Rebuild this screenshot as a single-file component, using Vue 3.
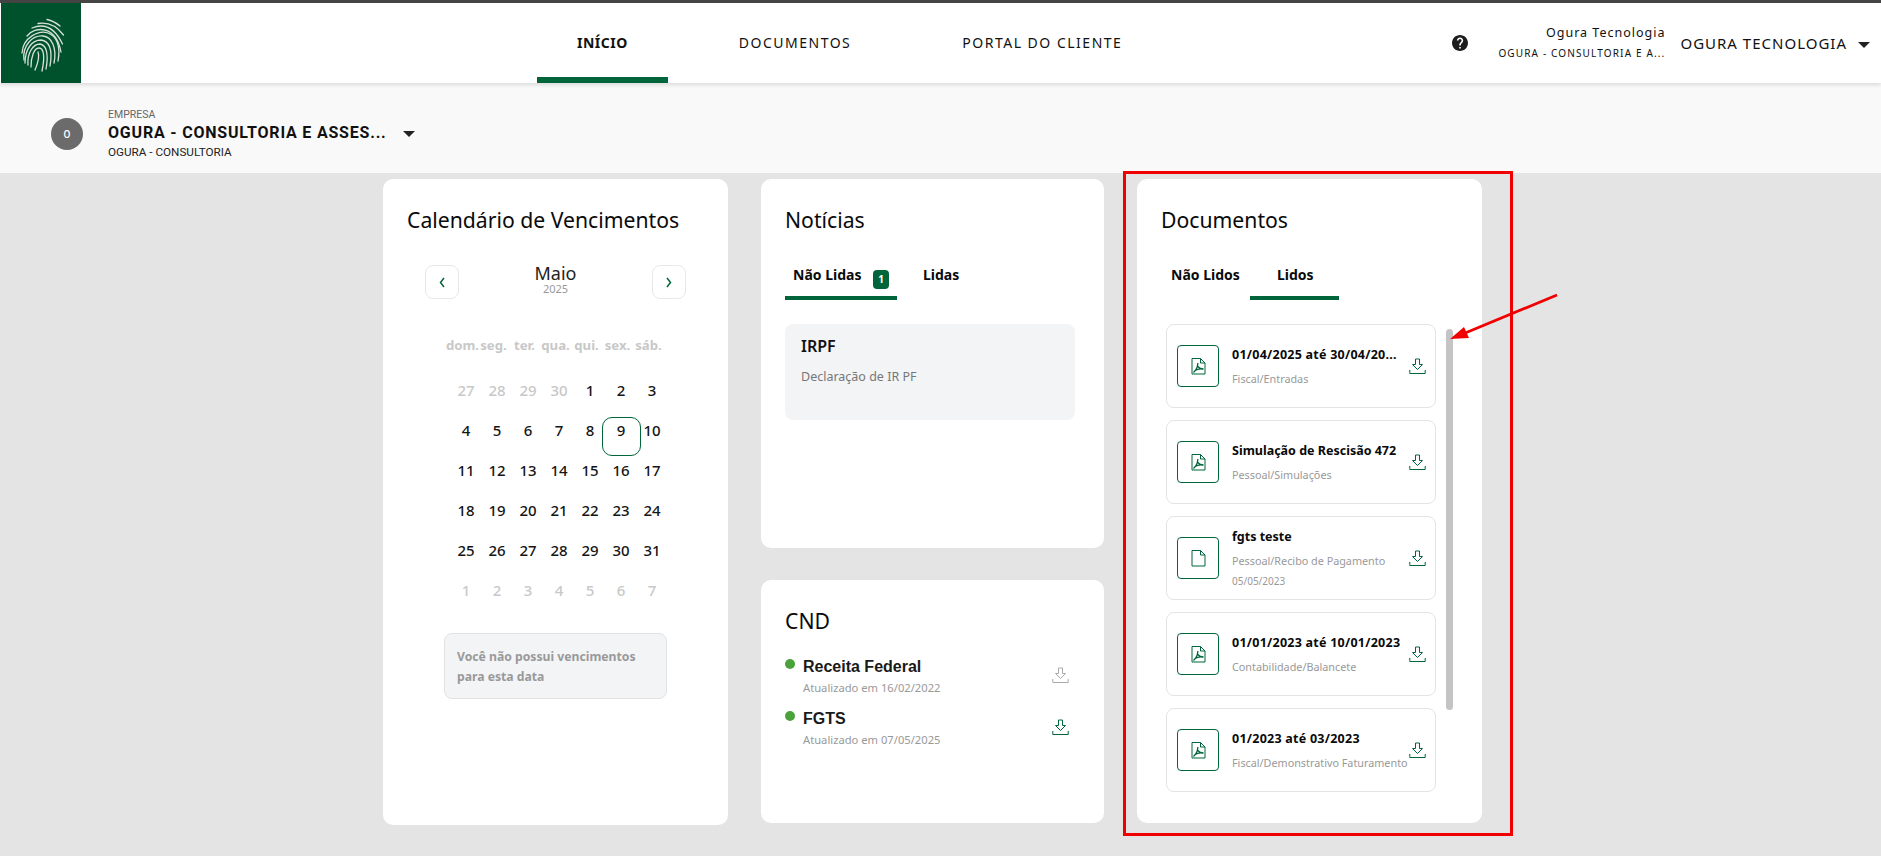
<template>
  <div class="page">
    <header class="topbar">
      <div class="logo">
        <svg width="80" height="80" viewBox="0 0 80 80" fill="none" stroke="#d5e2d9" stroke-width="1.3" stroke-linecap="round">
          <path d="M46 16.5Q53 18 59 23" />
          <path d="M37 20.5Q52 18 62.5 32" />
          <path d="M31 25Q50 17 61.5 41" />
          <path d="M26 33C34 23 55 22 60 49" />
          <path d="M21 50C22 34 38 27 47 30C55 33 60 42 57 58" />
          <path d="M23 57C21 42 32 32 42 33C51 34 56 45 53 60" />
          <path d="M24 60C24 46 31 37 40 37C48 38 52 46 49 63" />
          <path d="M27 62C26 50 32 41 39 41C45 42 48 50 45 66" />
          <path d="M30 64C30 54 33 45 38 45C43 45 44 54 41 68" />
          <path d="M34 67C37 60 39 54 37 49" />
        </svg>
      </div>
      <nav class="nav">
        <a
          v-for="item in navItems"
          :key="item"
          :class="['nav-item', { 'nav-item--active': item === 'INÍCIO' }]"
        >{{ item }}</a>
      </nav>
      <div class="user">
        <svg class="help" width="16" height="16" viewBox="2 2 20 20" fill="#1d1d1d">
          <path d="M12 2C6.48 2 2 6.48 2 12s4.48 10 10 10 10-4.48 10-10S17.52 2 12 2zm1 17h-2v-2h2v2zm2.07-7.75l-.9.92C13.45 12.9 13 13.5 13 15h-2v-.5c0-1.1.45-2.1 1.17-2.83l1.24-1.26c.37-.36.59-.86.59-1.41 0-1.1-.9-2-2-2s-2 .9-2 2H8c0-2.21 1.79-4 4-4s4 1.79 4 4c0 .88-.36 1.68-.93 2.25z" />
        </svg>
        <div class="user-info">
          <div class="user-name">Ogura Tecnologia</div>
          <div class="user-company">OGURA - CONSULTORIA E A...</div>
        </div>
        <div class="user-menu">OGURA TECNOLOGIA</div>
        <span class="caret"></span>
      </div>
    </header>

    <section class="company">
      <div class="avatar">O</div>
      <div class="company-info">
        <div class="company-label">EMPRESA</div>
        <div class="company-name">OGURA - CONSULTORIA E ASSES...</div>
        <div class="company-sub">OGURA - CONSULTORIA</div>
      </div>
      <span class="caret caret--company"></span>
    </section>

    <main class="content">
      <div class="card card--calendar">
        <h2 class="card-title">Calendário de Vencimentos</h2>
        <div class="month">
          <button class="month-btn">
            <svg width="6" height="11" viewBox="0 0 6 11" fill="none" stroke="#00653b" stroke-width="1.5"><path d="M5 1L1.500 5.500L5 10" /></svg>
          </button>
          <div class="month-label">
            <div class="month-name">Maio</div>
            <div class="month-year">2025</div>
          </div>
          <button class="month-btn">
            <svg width="6" height="11" viewBox="0 0 6 11" fill="none" stroke="#00653b" stroke-width="1.5"><path d="M1 1L4.500 5.500L1 10" /></svg>
          </button>
        </div>
        <div class="weekdays">
          <span v-for="day in weekdays" :key="day">{{ day }}</span>
        </div>
        <div class="days">
          <span
            v-for="(day, i) in days"
            :key="i"
            :class="['day', { 'day--muted': day.muted, 'day--selected': day.selected }]"
          >{{ day.n }}</span>
        </div>
        <div class="no-due">Você não possui vencimentos para esta data</div>
      </div>

      <div class="middle">
        <div class="card card--news">
          <h2 class="card-title">Notícias</h2>
          <div class="tabs">
            <div class="tab tab--news tab--active">Não Lidas <span class="badge">1</span></div>
            <div class="tab tab--news-read">Lidas</div>
          </div>
          <div class="news-item">
            <div class="news-title">IRPF</div>
            <div class="news-desc">Declaração de IR PF</div>
          </div>
        </div>

        <div class="card card--cnd">
          <h2 class="card-title">CND</h2>
          <div v-for="cnd in cnds" :key="cnd.name" class="cnd-row">
            <span class="dot"></span>
            <div class="cnd-text">
              <div class="cnd-name">{{ cnd.name }}</div>
              <div class="cnd-date">{{ cnd.date }}</div>
            </div>
            <svg :class="['download', 'cnd-download', { 'download--off': cnd.off }]" width="17" height="17" viewBox="0 0 17 17" fill="none">
              <path d="M6.500 1H10.500V6.500H13.500L8.500 11.500L3.500 6.500H6.500Z" />
              <path d="M.8 12V15.500H16.200V12" />
            </svg>
          </div>
        </div>
      </div>

      <div class="card card--docs">
        <h2 class="card-title">Documentos</h2>
        <div class="tabs">
          <div class="tab tab--docs">Não Lidos</div>
          <div class="tab tab--docs-read tab--active">Lidos</div>
        </div>
        <div class="doc-list">
          <div v-for="doc in docs" :key="doc.title" class="doc">
            <div class="doc-icon">
              <svg width="15" height="17" viewBox="0 0 15 17" fill="none" stroke="#00653b" stroke-width="1">
                <path d="M1 .5H9.500L14 5V16H1Z" />
                <path d="M9.500 .5V5H14" />
                <path v-if="doc.pdf" d="M2.500 14.500C5 12 7 9 6.800 5M6.800 8.500C8 10 10 11 12.500 11M4 12.500C6.500 11 9 10.500 11.500 11" stroke-width="1.300" />
              </svg>
            </div>
            <div class="doc-text">
              <div :class="['doc-title', { 'doc-title--date': doc.isDate }]">{{ doc.title }}</div>
              <div class="doc-path">{{ doc.path }}</div>
              <div v-if="doc.date" class="doc-date">{{ doc.date }}</div>
            </div>
            <svg class="download doc-download" width="17" height="17" viewBox="0 0 17 17" fill="none">
              <path d="M6.500 1H10.500V6.500H13.500L8.500 11.500L3.500 6.500H6.500Z" />
              <path d="M.8 12V15.500H16.200V12" />
            </svg>
          </div>
          <div class="scrollbar"></div>
        </div>
      </div>
    </main>

    <!-- marcação em vermelho sobre o screenshot -->
    <div class="mark-box"></div>
    <svg class="mark-arrow" width="120" height="60" viewBox="0 0 120 60">
      <path d="M113 3L14 44" stroke="#f00000" stroke-width="2.800" fill="none" />
      <path d="M6 47L20 35L25 46Z" fill="#f00000" />
    </svg>
  </div>
</template>

<script setup>
const navItems = ['INÍCIO', 'DOCUMENTOS', 'PORTAL DO CLIENTE']
const weekdays = ['dom.', 'seg.', 'ter.', 'qua.', 'qui.', 'sex.', 'sáb.']

const days = []
for (const n of [27, 28, 29, 30]) days.push({ n, muted: true })
for (let n = 1; n <= 31; n++) days.push({ n, selected: n === 9 })
for (let n = 1; n <= 7; n++) days.push({ n, muted: true })

const cnds = [
  { name: 'Receita Federal', date: 'Atualizado em 16/02/2022', off: true },
  { name: 'FGTS', date: 'Atualizado em 07/05/2025' }
]

const docs = [
  { title: '01/04/2025 até 30/04/20...', path: 'Fiscal/Entradas', pdf: true, isDate: true },
  { title: 'Simulação de Rescisão 472', path: 'Pessoal/Simulações', pdf: true },
  { title: 'fgts teste', path: 'Pessoal/Recibo de Pagamento', date: '05/05/2023' },
  { title: '01/01/2023 até 10/01/2023', path: 'Contabilidade/Balancete', pdf: true, isDate: true },
  { title: '01/2023 até 03/2023', path: 'Fiscal/Demonstrativo Faturamento', pdf: true, isDate: true }
]
</script>

<style>
html,
body {
  margin: 0;
  overflow: hidden;
}
</style>

<style scoped>
.page {
  position: relative;
  height: 856px;
  background: #e4e4e4;
  font-family: "Noto Sans", sans-serif;
  color: #111;
  overflow: hidden;
}

.topbar {
  display: flex;
  height: 83px;
  box-sizing: border-box;
  border-top: 3px solid #444;
  background: #fff;
  box-shadow: 0 2px 4px rgba(0, 0, 0, 0.12);
  position: relative;
  z-index: 1;
}

.logo {
  width: 80px;
  height: 80px;
  margin-left: 1px;
  background: #00522d;
}

.logo svg {
  display: block;
}

.nav {
  display: flex;
  gap: 31px;
  margin-left: 456px;
}

.nav-item {
  display: flex;
  align-items: center;
  padding: 4px 40px 0;
  border-bottom: 6px solid transparent;
  box-sizing: border-box;
  font-size: 14px;
  letter-spacing: 1.500px;
  color: #111;
}

.nav-item--active {
  font-weight: 700;
  letter-spacing: 0.5px;
  border-bottom-color: #00653b;
}

.user {
  display: flex;
  align-items: center;
  margin-left: auto;
  padding-right: 11px;
}

.help {
  margin-right: 30px;
}

.user-info {
  text-align: right;
  margin-right: 15px;
}

.user-name {
  font-size: 12.500px;
  line-height: 18px;
  letter-spacing: 1px;
}

.user-company {
  font-size: 10px;
  line-height: 18px;
  margin-top: 2px;
  letter-spacing: 1.150px;
}

.user-menu {
  font-size: 15px;
  letter-spacing: 1px;
  margin-right: 11px;
}

.caret {
  width: 0;
  height: 0;
  border-left: 6px solid transparent;
  border-right: 6px solid transparent;
  border-top: 6px solid #222;
  margin-top: 3px;
}

.company {
  display: flex;
  align-items: center;
  height: 90px;
  padding: 12px 0 0 51px;
  background: #f9f9f9;
  box-sizing: border-box;
}

.avatar {
  display: flex;
  align-items: center;
  justify-content: center;
  width: 32px;
  height: 32px;
  border-radius: 50%;
  background: #6b6b6b;
  color: #fff;
  font-family: "Roboto", sans-serif;
  font-size: 10px;
  font-weight: 500;
}

.company-info {
  margin-left: 25px;
  width: 295px;
  font-family: "Roboto", sans-serif;
}

.company-label {
  font-size: 10.500px;
  line-height: 14px;
  color: #666;
}

.company-name {
  font-size: 16px;
  line-height: 22px;
  font-weight: 700;
  letter-spacing: 0.8px;
  color: #111;
}

.company-sub {
  font-size: 11.700px;
  line-height: 16px;
  color: #222;
}

.caret--company {
  margin-top: 0;
}

.content {
  display: grid;
  grid-template-columns: 345px 343px 345px;
  column-gap: 33px;
  margin-left: 383px;
  padding-top: 6px;
}

.card {
  background: #fff;
  border-radius: 10px;
  box-sizing: border-box;
}

.card-title {
  margin: 0;
  font-size: 21.200px;
  line-height: 30px;
  font-weight: 400;
  color: #0a0a0a;
}

.card--calendar {
  height: 646px;
  padding: 26px 24px;
}

.month {
  display: flex;
  justify-content: space-between;
  margin: 30px 18px 0;
  width: 261px;
}

.month-btn {
  display: flex;
  align-items: center;
  justify-content: center;
  width: 34px;
  height: 34px;
  padding: 0;
  background: #fff;
  border: 1px solid #e8e8e8;
  border-radius: 8px;
}

.month-label {
  text-align: center;
  margin-top: -2px;
}

.month-name {
  font-size: 18px;
  line-height: 20px;
  color: #222;
}

.month-year {
  font-size: 11px;
  line-height: 12px;
  color: #999;
}

.weekdays {
  display: grid;
  grid-template-columns: repeat(7, 31px);
  justify-items: center;
  margin: 36px 0 0 40px;
  font-size: 13.200px;
  line-height: 20px;
  font-weight: 700;
  color: #c8c8c8;
  white-space: nowrap;
}

.days {
  display: grid;
  grid-template-columns: repeat(7, 31px);
  grid-auto-rows: 40px;
  margin: 15px 0 0 43.500px;
}

.day {
  display: flex;
  align-items: center;
  justify-content: center;
  position: relative;
  font-size: 15px;
  font-weight: 500;
  color: #151515;
}

.day--muted {
  color: #c8c8c8;
}

.day--selected::after {
  content: "";
  position: absolute;
  left: -4px;
  top: 7px;
  width: 39px;
  height: 39px;
  box-sizing: border-box;
  border: 1px solid #00653b;
  border-radius: 10px;
}

.no-due {
  margin: 23px 0 0 37px;
  width: 223px;
  height: 66px;
  padding: 13px 12px;
  box-sizing: border-box;
  background: #f3f4f6;
  border: 1px solid #e2e2e2;
  border-radius: 8px;
  font-size: 12.200px;
  line-height: 20px;
  font-weight: 700;
  color: #999;
}

.middle {
  display: flex;
  flex-direction: column;
  gap: 32px;
}

.card--news {
  height: 369px;
  padding: 26px 24px;
}

.tabs {
  display: flex;
  margin-top: 20px;
  height: 45px;
}

.tab {
  position: relative;
  box-sizing: border-box;
  height: 45px;
  padding-top: 9px;
  font-size: 14px;
  line-height: 22px;
  font-weight: 700;
  color: #0a0a0a;
  border-bottom: 4px solid transparent;
}

.tab--active {
  border-bottom-color: #00653b;
}

.tab--news {
  width: 112px;
  padding-left: 8px;
}

.tab--news-read {
  margin-left: 26px;
}

.badge {
  display: inline-flex;
  align-items: center;
  justify-content: center;
  width: 16px;
  height: 19px;
  margin-left: 8px;
  border-radius: 4px;
  background: #00653b;
  color: #fff;
  font-size: 10px;
  vertical-align: -3px;
}

.news-item {
  width: 290px;
  height: 96px;
  margin-top: 24px;
  padding: 10px 16px;
  box-sizing: border-box;
  background: #f3f4f6;
  border-radius: 8px;
}

.news-title {
  font-size: 16px;
  line-height: 24px;
  font-weight: 600;
}

.news-desc {
  margin-top: 10px;
  font-size: 12.500px;
  line-height: 18px;
  color: #777;
}

.card--cnd {
  height: 243px;
  padding: 26px 24px;
}

.cnd-row {
  display: flex;
  height: 52px;
}

.card--cnd .card-title {
  margin-bottom: 21px;
}

.dot {
  width: 10px;
  height: 10px;
  margin-top: 2px;
  border-radius: 50%;
  background: #4aa33a;
}

.cnd-text {
  margin-left: 8px;
}

.cnd-name {
  font-family: "Liberation Sans", sans-serif;
  font-size: 16px;
  line-height: 20px;
  font-weight: 700;
  color: #1a1a1a;
}

.cnd-date {
  margin-top: 3px;
  font-size: 11.200px;
  line-height: 16px;
  color: #999;
}

.download {
  flex: none;
  stroke: #00653b;
  stroke-width: 1;
}

.download--off {
  stroke: #aaa;
}

.cnd-download {
  margin: 10px 11px 0 auto;
}

.card--docs {
  height: 644px;
  padding: 26px 24px;
}

.tab--docs {
  width: 89px;
  padding-left: 10px;
}

.tab--docs-read {
  width: 89px;
  padding-left: 27px;
}

.doc-list {
  position: relative;
  display: flex;
  flex-direction: column;
  gap: 12px;
  margin: 24px 0 0 5px;
  width: 270px;
}

.doc {
  display: flex;
  align-items: center;
  height: 84px;
  padding: 0 9px 0 10px;
  box-sizing: border-box;
  border: 1px solid #e4e4e4;
  border-radius: 8px;
}

.doc-icon {
  display: flex;
  align-items: center;
  justify-content: center;
  flex: none;
  width: 42px;
  height: 42px;
  box-sizing: border-box;
  border: 1px solid #00653b;
  border-radius: 4px;
}

.doc-text {
  flex: 1;
  min-width: 0;
  margin-left: 13px;
}

.doc-title {
  font-size: 12.500px;
  line-height: 18px;
  font-weight: 700;
  color: #0a0a0a;
  white-space: nowrap;
}

.doc-title--date {
  letter-spacing: 0.25px;
}

.doc-path {
  margin-top: 7px;
  font-size: 10.800px;
  line-height: 16px;
  color: #999;
  white-space: nowrap;
}

.doc-date {
  margin-top: 4px;
  font-size: 10px;
  line-height: 16px;
  color: #999;
}

.doc-download {
  margin-left: 3px;
}

.scrollbar {
  position: absolute;
  left: 280px;
  top: 5px;
  width: 7px;
  height: 381px;
  border-radius: 4px;
  background: #c4c4c4;
}

.mark-box {
  position: absolute;
  left: 1123px;
  top: 171px;
  width: 390px;
  height: 665px;
  box-sizing: border-box;
  border: 3px solid #f00000;
}

.mark-arrow {
  position: absolute;
  left: 1444px;
  top: 292px;
}
</style>
